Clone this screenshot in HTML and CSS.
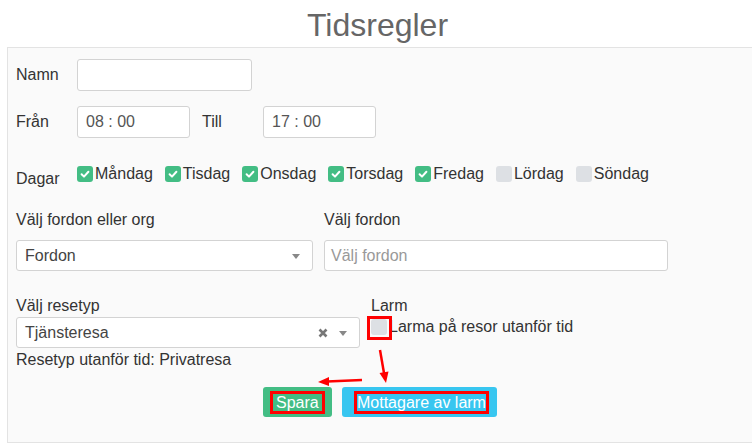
FILE: index.html
```html
<!DOCTYPE html>
<html lang="sv">
<head>
<meta charset="utf-8">
<title>Tidsregler</title>
<link rel="stylesheet" href="styles.css">
</head>
<body>
<div class="page">
  <h1 class="title">Tidsregler</h1>
  <div class="panel">
    <div class="row row-name">
      <label class="lbl">Namn</label>
      <div class="input input-name"></div>
    </div>
    <div class="row row-time">
      <label class="lbl">Från</label>
      <div class="input input-time">08 : 00</div>
      <label class="lbl lbl-till">Till</label>
      <div class="input input-time">17 : 00</div>
    </div>
    <div class="row row-days">
      <label class="lbl lbl-days">Dagar</label>
      <div class="days">
        <span class="chk-item"><span class="box on"><svg viewBox="0 0 16 16" width="16" height="16"><path d="M4.6 8.3 L7 10.6 L11.4 5.8" fill="none" stroke="#fff" stroke-width="2" stroke-linecap="round" stroke-linejoin="round"/></svg></span>Måndag</span>
        <span class="chk-item"><span class="box on"><svg viewBox="0 0 16 16" width="16" height="16"><path d="M4.6 8.3 L7 10.6 L11.4 5.8" fill="none" stroke="#fff" stroke-width="2" stroke-linecap="round" stroke-linejoin="round"/></svg></span>Tisdag</span>
        <span class="chk-item"><span class="box on"><svg viewBox="0 0 16 16" width="16" height="16"><path d="M4.6 8.3 L7 10.6 L11.4 5.8" fill="none" stroke="#fff" stroke-width="2" stroke-linecap="round" stroke-linejoin="round"/></svg></span>Onsdag</span>
        <span class="chk-item"><span class="box on"><svg viewBox="0 0 16 16" width="16" height="16"><path d="M4.6 8.3 L7 10.6 L11.4 5.8" fill="none" stroke="#fff" stroke-width="2" stroke-linecap="round" stroke-linejoin="round"/></svg></span>Torsdag</span>
        <span class="chk-item"><span class="box on"><svg viewBox="0 0 16 16" width="16" height="16"><path d="M4.6 8.3 L7 10.6 L11.4 5.8" fill="none" stroke="#fff" stroke-width="2" stroke-linecap="round" stroke-linejoin="round"/></svg></span>Fredag</span>
        <span class="chk-item"><span class="box"></span>Lördag</span>
        <span class="chk-item"><span class="box"></span>Söndag</span>
      </div>
    </div>
    <div class="row row-cols">
      <div class="col col-a">
        <div class="field-lbl">Välj fordon eller org</div>
        <div class="select">
          <span class="sel-text">Fordon</span>
          <span class="caret"></span>
        </div>
      </div>
      <div class="col col-b">
        <div class="field-lbl">Välj fordon</div>
        <div class="select"><span class="sel-text placeholder">Välj fordon</span></div>
      </div>
    </div>
    <div class="row row-cols row-type">
      <div class="col col-c">
        <div class="field-lbl">Välj resetyp</div>
        <div class="select">
          <span class="sel-text">Tjänsteresa</span>
          <svg class="clear" viewBox="0 0 10 10" width="10" height="10"><path d="M1.5 1.5 L8.5 8.5 M8.5 1.5 L1.5 8.5" stroke="#777" stroke-width="2.6"/></svg>
          <span class="caret"></span>
        </div>
        <div class="note">Resetyp utanför tid: Privatresa</div>
      </div>
      <div class="col col-d">
        <div class="field-lbl">Larm</div>
        <div class="chk-item alarm"><span class="box mark"></span>Larma på resor utanför tid</div>
      </div>
    </div>
    <div class="actions">
      <button class="btn btn-save"><span class="mark-text">Spara</span></button>
      <button class="btn btn-alarm"><span class="mark-text wide">Mottagare av larm</span></button>
    </div>
  </div>
  <svg class="arrows" width="752" height="444" viewBox="0 0 752 444">
    <path d="M380 350 L384.5 376" stroke="#f00" stroke-width="2.5" fill="none"/>
    <path d="M379.5 373 L386 383 L388.5 371.5 Z" fill="#f00"/>
    <path d="M362 380 L327 381.5" stroke="#f00" stroke-width="2.5" fill="none"/>
    <path d="M329 377 L318 382 L329 386 Z" fill="#f00"/>
  </svg>
</div>
</body>
</html>
```

FILE: styles.css
```css
html, body {
  margin: 0;
  padding: 0;
  overflow: hidden;
  background: #fff;
}

body {
  font-family: "Liberation Sans", Arial, sans-serif;
  font-size: 16px;
  color: #333;
  width: 752px;
  height: 444px;
}

.page {
  position: relative;
  width: 752px;
  height: 444px;
}

.title {
  margin: 0;
  padding: 7px 0 0 7px;
  width: 748px;
  height: 47px;
  box-sizing: border-box;
  text-align: center;
  font-weight: normal;
  font-size: 32px;
  line-height: 36px;
  color: #666;
}

.panel {
  margin-left: 7px;
  width: 760px;
  height: 396px;
  box-sizing: border-box;
  border: 1px solid #e3e3e3;
  background: #fafafa;
  padding: 11px 0 0 8px;
}

.row {
  display: flex;
  align-items: center;
}

.lbl {
  width: 61px;
  line-height: 20px;
}

.input {
  box-sizing: border-box;
  height: 32px;
  background: #fff;
  border: 1px solid #d3d3d3;
  border-radius: 3px;
  padding: 0 8px;
  line-height: 30px;
  color: #555;
}

.input-name { width: 175px; }

.row-time { margin-top: 15px; }

.input-time { width: 113px; }

.lbl-till { margin-left: 12px; }

.row-days {
  margin-top: 25px;
  align-items: flex-start;
}

.lbl-days {
  padding-top: 6px;
  line-height: 20px;
}

.days {
  display: flex;
  gap: 12px;
}

.chk-item {
  display: flex;
  align-items: center;
  gap: 2px;
  height: 22px;
  line-height: 22px;
}

.box {
  width: 16px;
  height: 16px;
  border-radius: 3px;
  background: #dde0e4;
  display: block;
}

.box svg { display: block; }

.box.on { background: #43bd84; }

.row-cols {
  margin-top: 21px;
  align-items: flex-start;
  gap: 11px;
}

.field-lbl {
  line-height: 20px;
  height: 20px;
}

.col-a .field-lbl, .col-b .field-lbl { margin-bottom: 10px; }

.col-a { width: 297px; }
.col-b { width: 344px; }
.col-c { width: 344px; }

.select {
  box-sizing: border-box;
  height: 31px;
  background: #fff;
  border: 1px solid #d3d3d3;
  border-radius: 3px;
  padding: 0 12px 0 8px;
  display: flex;
  align-items: center;
  line-height: 29px;
  color: #444;
}

.sel-text { flex: 1; }

.placeholder { color: #999; margin-left: -2px; }

.caret {
  width: 0;
  height: 0;
  border-top: 5px solid #888;
  border-left: 4px solid transparent;
  border-right: 4px solid transparent;
  margin-top: 1px;
}

.clear {
  display: block;
  margin-right: 11px;
}

.row-type { margin-top: 25px; }

.row-type .field-lbl { margin-bottom: 1px; }

.note {
  margin-top: 2px;
  line-height: 20px;
}

.alarm {
  margin-top: 1px;
  height: 20px;
}

.box.mark {
  position: relative;
}

.box.mark::after {
  content: "";
  position: absolute;
  left: -4px;
  top: -3px;
  width: 19px;
  height: 18px;
  border: 3px solid #f00;
}

.actions {
  display: flex;
  gap: 10px;
  margin-top: 17px;
  padding-left: 247px;
}

.btn {
  height: 30px;
  border: none;
  border-radius: 3px;
  color: #fff;
  font-family: "Liberation Sans", Arial, sans-serif;
  font-size: 16px;
  display: flex;
  align-items: center;
  cursor: pointer;
}

.btn-save {
  background: #43bd84;
  width: 69px;
  padding: 0 0 0 7px;
}

.btn-alarm {
  background: #38c6f0;
  width: 155px;
  padding: 0 0 0 12px;
}

.mark-text {
  border: 3px solid #f00;
  padding: 0 3px;
  line-height: 17px;
}

.mark-text.wide { padding: 0; }

.arrows {
  position: absolute;
  left: 0;
  top: 0;
  pointer-events: none;
}
```
